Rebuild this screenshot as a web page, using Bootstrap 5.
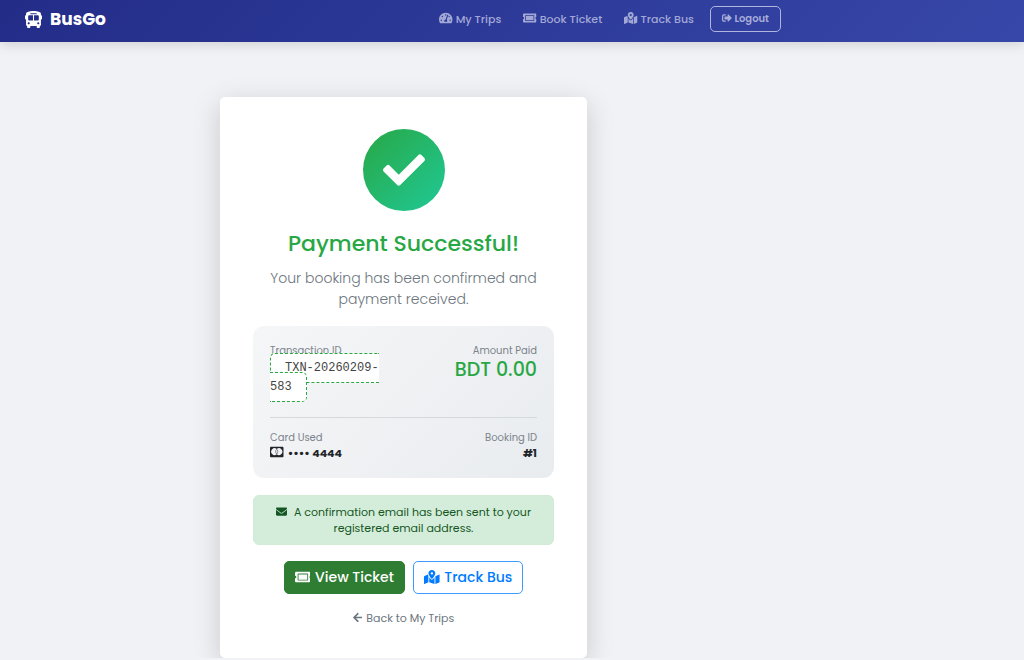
<!DOCTYPE html>
<html lang="en">
<head>
<meta charset="utf-8">
<meta name="viewport" content="width=device-width, initial-scale=1">
<title>BusGo - Payment Successful</title>
<link href="https://cdn.jsdelivr.net/npm/bootstrap@5.3.0/dist/css/bootstrap.min.css" rel="stylesheet">
<style>
body { font-family: Poppins, "Open Sans", sans-serif; background: #f0f2f5; color: #212529; }
svg { fill: currentColor; }
.ico { height: 1em; vertical-align: -0.125em; }
.page-wrap { max-width: 807px; }
.topbar { background: linear-gradient(135deg, #232d88 0%, #3747a9 100%); box-shadow: 0 2px 12px rgba(0,0,0,.15); padding: 0; }
.topbar-inner { padding: 6px 26px 10px 25px; }
.brand-name { font-size: 17px; line-height: 24px; font-weight: 700; color: #fff; text-decoration: none; }
.brand-name svg { height: 17px; }
.top-links { gap: 22px; }
.top-link { font-size: 11px; line-height: 16px; font-weight: 500; color: #a2a8d6; text-decoration: none; white-space: nowrap; }
.top-link .ico, .value .ico { height: 12px; }
.value .ico { margin-right: 2px; }
.btn-logout, .btn-logout:hover { font-size: 10px; font-weight: 600; line-height: 16px; color: #a8aeda; border: 1px solid #b0b5de; border-radius: 5px; padding: 4px 11px; }
.pay-col { max-width: 367px; margin: 55px auto 0; }
.pay-card { border: 0; border-radius: 5px; padding: 32px 33px; box-shadow: 0 7px 28px rgba(0,0,0,.17); }
.check-circle { width: 82px; height: 82px; margin-bottom: 19px; background: linear-gradient(135deg, #28a745, #20c997); color: #fff; }
.check-circle svg { height: 42px; }
.pay-title { font-size: 22px; font-weight: 500; line-height: 28px; color: #28a745; margin-bottom: 10px; }
.pay-text { font-size: 14px; font-weight: 300; line-height: 21px; color: #6c757d; margin-bottom: 16px; }
.details { background: linear-gradient(135deg, #f5f6f8, #e9ecef); border-radius: 11px; padding: 17px; margin-bottom: 17px; }
.tiny-label { font-size: 10px; line-height: 15px; color: #7b838b; }
.txn-wrap { font-family: "Liberation Mono", monospace; font-size: 12px; line-height: 19px; padding-top: 1px; }
.txn { color: #444; background: #fff; border: 1px dashed #28a745; border-radius: 5px; padding: 7px 14px; }
.amount { font-size: 19px; font-weight: 500; line-height: 24px; color: #28a745; }
.rule { border-top: 1px solid #d6d9dc; margin: 20px 0 12px; }
.value { font-size: 11px; font-weight: 700; line-height: 16px; }
.mail-note { font-size: 11px; line-height: 16px; color: #155724; background: #d4edda; border: 1px solid #d0ebd6; border-radius: 6px; padding: 8px 16px; margin-bottom: 16px; }
.act { font-size: 14px; font-weight: 500; line-height: 21px; padding: 5px 10px; border-radius: 5px; }
.act .ico, .back-link .ico { margin-right: 1px; }
.act-ticket, .act-ticket:hover { background: #2e7d32; border-color: #2e7d32; color: #fff; }
.act-track, .act-track:hover { border-color: #3d9aff; color: #007bff; background: #fff; }
.back-link { font-size: 11px; line-height: 16px; color: #6c757d; text-decoration: none; margin-top: 16px; }
</style>
</head>
<body>
<svg class="d-none">
  <symbol id="i-ticket" viewBox="0 0 576 512"><path d="M128 160h320v192H128V160zm400 96c0 26.51 21.49 48 48 48v96c0 26.51-21.49 48-48 48H48c-26.51 0-48-21.49-48-48v-96c26.51 0 48-21.49 48-48s-21.49-48-48-48v-96c0-26.51 21.49-48 48-48h480c26.51 0 48 21.49 48 48v96c-26.51 0-48 21.49-48 48zm-48-104c0-13.255-10.745-24-24-24H120c-13.255 0-24 10.745-24 24v208c0 13.255 10.745 24 24 24h336c13.255 0 24-10.745 24-24V152z"/></symbol>
  <symbol id="i-map" viewBox="0 0 576 512"><path d="M288 0c-69.59 0-126 56.41-126 126 0 56.26 82.35 158.8 113.9 196.02 6.39 7.54 17.82 7.54 24.2 0C331.65 284.8 414 182.26 414 126 414 56.41 357.59 0 288 0zm0 168c-23.2 0-42-18.8-42-42s18.8-42 42-42 42 18.8 42 42-18.8 42-42 42zM20.12 215.95A32.006 32.006 0 0 0 0 245.66v250.32c0 11.32 11.43 19.06 21.94 14.86L160 448V214.92c-8.84-15.98-16.07-31.54-21.25-46.42L20.12 215.95zM288 359.67c-14.07 0-27.38-6.18-36.51-16.96-19.66-23.2-40.57-49.62-59.49-76.72v182l192 64V266c-18.92 27.09-39.82 53.52-59.49 76.72-9.13 10.77-22.44 16.95-36.51 16.95zm266.06-198.51L416 224v288l139.88-55.95A31.996 31.996 0 0 0 576 426.34V176.02c0-11.32-11.43-19.06-21.94-14.86z"/></symbol>
</svg>

<nav class="topbar navbar">
  <div class="page-wrap topbar-inner w-100 d-flex align-items-center justify-content-between">
    <a href="#" class="brand-name d-flex align-items-center gap-2">
      <svg viewBox="0 0 512 512" aria-hidden="true"><path d="M488 128h-8V80c0-44.8-99.2-80-224-80S32 35.2 32 80v48h-8c-13.25 0-24 10.74-24 24v80c0 13.25 10.75 24 24 24h8v160c0 17.67 14.33 32 32 32v32c0 17.67 14.33 32 32 32h32c17.67 0 32-14.33 32-32v-32h192v32c0 17.67 14.33 32 32 32h32c17.67 0 32-14.33 32-32v-32h6.4c16 0 25.6-12.8 25.6-25.6V256h8c13.25 0 24-10.75 24-24v-80c0-13.26-10.75-24-24-24zM160 72c0-4.42 3.58-8 8-8h176c4.42 0 8 3.58 8 8v16c0 4.42-3.58 8-8 8H168c-4.42 0-8-3.58-8-8V72zm-48 328c-17.67 0-32-14.33-32-32s14.33-32 32-32 32 14.33 32 32-14.33 32-32 32zm128-112H128c-17.67 0-32-14.33-32-32v-96c0-17.67 14.33-32 32-32h112v160zm32 0V128h112c17.67 0 32 14.33 32 32v96c0 17.67-14.33 32-32 32H272zm128 112c-17.67 0-32-14.33-32-32s14.33-32 32-32 32 14.33 32 32-14.33 32-32 32z"/></svg>
      BusGo
    </a>
    <div class="d-flex align-items-center gap-3">
      <div class="top-links d-flex">
        <a href="#" class="top-link"><svg class="ico" viewBox="0 0 576 512" aria-hidden="true"><path d="M288 32C128.94 32 0 160.94 0 320c0 52.8 14.25 102.26 39.06 144.8 5.61 9.62 16.3 15.2 27.44 15.2h443c11.14 0 21.83-5.58 27.44-15.2C561.75 422.26 576 372.8 576 320c0-159.06-128.94-288-288-288zm0 64c14.71 0 26.58 10.13 30.32 23.65-1.11 2.26-2.64 4.23-3.45 6.67l-9.22 27.67c-5.13 3.49-10.97 6.01-17.64 6.01-17.67 0-32-14.33-32-32S270.33 96 288 96zM96 384c-17.67 0-32-14.33-32-32s14.33-32 32-32 32 14.33 32 32-14.33 32-32 32zm48-160c-17.67 0-32-14.33-32-32s14.33-32 32-32 32 14.33 32 32-14.33 32-32 32zm246.77-72.41l-61.33 184C343.13 347.33 352 364.54 352 384c0 11.72-3.38 22.55-8.88 32H232.88c-5.5-9.45-8.88-20.28-8.88-32 0-33.94 26.5-61.43 59.9-63.59l61.34-184.01c4.17-12.56 17.73-19.45 30.36-15.17 12.57 4.19 19.35 17.79 15.17 30.36zm14.66 57.2l15.52-46.55c3.47-1.29 7.13-2.23 11.05-2.23 17.67 0 32 14.33 32 32s-14.33 32-32 32c-11.38-.01-20.89-6.28-26.57-15.22zM480 384c-17.67 0-32-14.33-32-32s14.33-32 32-32 32 14.33 32 32-14.33 32-32 32z"/></svg> My Trips</a>
        <a href="#" class="top-link"><svg class="ico" viewBox="0 0 576 512" aria-hidden="true"><use href="#i-ticket"/></svg> Book Ticket</a>
        <a href="#" class="top-link"><svg class="ico" viewBox="0 0 576 512" aria-hidden="true"><use href="#i-map"/></svg> Track Bus</a>
      </div>
      <button type="button" class="btn btn-logout"><svg class="ico" viewBox="0 0 512 512" aria-hidden="true"><path d="M497 273L329 441c-15 15-41 4.5-41-17v-96H152c-13.3 0-24-10.7-24-24v-96c0-13.3 10.7-24 24-24h136V88c0-21.4 25.9-32 41-17l168 168c9.3 9.4 9.3 24.6 0 34zM192 436v-40c0-6.6-5.4-12-12-12H96c-17.7 0-32-14.3-32-32V160c0-17.7 14.3-32 32-32h84c6.6 0 12-5.4 12-12V76c0-6.6-5.4-12-12-12H96c-53 0-96 43-96 96v192c0 53 43 96 96 96h84c6.6 0 12-5.4 12-12z"/></svg> Logout</button>
    </div>
  </div>
</nav>

<main class="page-wrap">
  <div class="pay-col">
    <div class="card pay-card text-center">
      <div class="check-circle rounded-circle mx-auto d-flex align-items-center justify-content-center">
        <svg viewBox="0 0 512 512" aria-hidden="true"><path d="M173.898 439.404l-166.4-166.4c-9.997-9.997-9.997-26.206 0-36.204l36.203-36.204c9.997-9.998 26.207-9.998 36.204 0L192 312.69 432.095 72.596c9.997-9.997 26.207-9.997 36.204 0l36.203 36.204c9.997 9.997 9.997 26.206 0 36.204l-294.4 294.401c-9.998 9.997-26.207 9.997-36.204-.001z"/></svg>
      </div>
      <h1 class="pay-title">Payment Successful!</h1>
      <p class="pay-text">Your booking has been confirmed and payment received.</p>

      <div class="details">
        <div class="row">
          <div class="col-6 text-start">
            <div class="tiny-label">Transaction ID</div>
            <div class="txn-wrap"><span class="txn">TXN-20260209-583</span></div>
          </div>
          <div class="col-6 text-end">
            <div class="tiny-label">Amount Paid</div>
            <div class="amount">BDT 0.00</div>
          </div>
        </div>
        <div class="rule"></div>
        <div class="row">
          <div class="col-6 text-start">
            <div class="tiny-label">Card Used</div>
            <div class="value"><svg class="ico" viewBox="0 0 576 512" aria-hidden="true"><path fill-rule="evenodd" d="M48 32h480c26 0 48 22 48 48v352c0 26-22 48-48 48H48c-26 0-48-22-48-48V80c0-26 22-48 48-48zM288 127A145 145 0 1 0 288 353A145 145 0 1 0 288 127z"/><path fill="none" stroke="currentColor" stroke-width="22" d="M288 140c-62 60-62 140 0 200c62-60 62-140 0-200z"/></svg> •••• 4444</div>
          </div>
          <div class="col-6 text-end">
            <div class="tiny-label">Booking ID</div>
            <div class="value">#1</div>
          </div>
        </div>
      </div>

      <div class="mail-note"><svg class="ico me-1" viewBox="0 0 512 512" aria-hidden="true"><path d="M502.3 190.8c3.9-3.1 9.7-.2 9.7 4.7V400c0 26.5-21.5 48-48 48H48c-26.5 0-48-21.5-48-48V195.6c0-5 5.7-7.8 9.7-4.7 22.4 17.4 52.1 39.5 154.1 113.6 21.1 15.4 56.7 47.8 92.2 47.6 35.7.3 72-32.8 92.3-47.6 102-74.1 131.6-96.3 154-113.7zM256 320c23.2.4 56.6-29.2 73.4-41.4 132.7-96.3 142.8-104.7 173.4-128.7 5.8-4.5 9.2-11.5 9.2-18.9v-19c0-26.5-21.5-48-48-48H48c-26.5 0-48 21.5-48 48v19c0 7.4 3.4 14.3 9.2 18.9 30.6 23.9 40.7 32.4 173.4 128.7 16.8 12.2 50.2 41.8 73.4 41.4z"/></svg> A confirmation email has been sent to your registered email address.</div>

      <div class="d-flex justify-content-center gap-2">
        <button type="button" class="btn act act-ticket"><svg class="ico" viewBox="0 0 576 512" aria-hidden="true"><use href="#i-ticket"/></svg> View Ticket</button>
        <button type="button" class="btn act act-track"><svg class="ico" viewBox="0 0 576 512" aria-hidden="true"><use href="#i-map"/></svg> Track Bus</button>
      </div>
      <a href="#" class="back-link"><svg class="ico" viewBox="0 0 448 512" aria-hidden="true"><path d="M257.5 445.1l-22.2 22.2c-9.4 9.4-24.6 9.4-33.9 0L7 273c-9.4-9.4-9.4-24.6 0-33.9L201.4 44.7c9.4-9.4 24.6-9.4 33.9 0l22.2 22.2c9.5 9.5 9.3 25-.4 34.3L136.6 216H424c13.3 0 24 10.7 24 24v32c0 13.3-10.7 24-24 24H136.6l120.5 114.8c9.8 9.3 10 24.8.4 34.3z"/></svg> Back to My Trips</a>
    </div>
  </div>
</main>
<script src="https://cdn.jsdelivr.net/npm/bootstrap@5.3.0/dist/js/bootstrap.bundle.min.js"></script>
</body>
</html>
